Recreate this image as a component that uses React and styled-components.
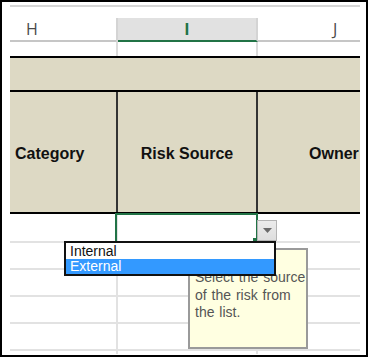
import React from 'react';
import styled, { createGlobalStyle } from 'styled-components';

const GlobalStyle = createGlobalStyle`
  html, body {
    margin: 0;
    padding: 0;
    background: #fff;
  }
  * {
    box-sizing: border-box;
  }
`;

const COLS = '108px 140px 102px';
const TAN = '#ddd9c4';
const GRID = '#e2e2e2';
const EXCEL_GREEN = '#217346';

const Frame = styled.div`
  position: relative;
  width: 368px;
  height: 357px;
  border: 2px solid #000;
  background: #fff;
  padding: 3px 0 0 8px;
  overflow: hidden;
`;

const Sheet = styled.div`
  width: 350px;
  height: 349px;
  overflow: hidden;
  display: flex;
  flex-direction: column;
  font-family: 'Liberation Sans', Arial, sans-serif;
`;

const TopRule = styled.div`
  flex: none;
  height: 2px;
  background: #d6d6d6;
`;

const ColHeadRow = styled.div`
  flex: none;
  display: grid;
  grid-template-columns: ${COLS};
  align-items: end;
  height: 35px;
`;

const ColHead = styled.div`
  height: 24px;
  display: flex;
  align-items: center;
  justify-content: ${p => (p.$active ? 'center' : 'flex-start')};
  padding-left: ${p => p.$pad || 0}px;
  padding-bottom: 1px;
  font-family: 'Open Sans', 'Noto Sans', sans-serif;
  font-size: 16px;
  font-weight: ${p => (p.$active ? 700 : 400)};
  color: ${p => (p.$active ? EXCEL_GREEN : '#4a4a4a')};
  background: ${p => (p.$active ? '#e1e1e1' : 'transparent')};
  border-bottom: 2px solid ${p => (p.$active ? EXCEL_GREEN : '#c6c6c6')};
  border-right: ${p => (p.$active ? '2px solid #d4d4d4' : 'none')};
  box-shadow: ${p => (p.$active ? '-2px 0 0 #d4d4d4' : 'none')};
`;

const GapRow = styled.div`
  flex: none;
  display: grid;
  grid-template-columns: ${COLS};
  height: 14px;
`;

const GapCell = styled.div`
  border-right: ${p => (p.$active ? '2px solid #dcdcdc' : 'none')};
  box-shadow: ${p => (p.$active ? '-2px 0 0 #dcdcdc' : 'none')};
`;

const BlackRule = styled.div`
  flex: none;
  height: 2px;
  background: #000;
`;

const TanBand = styled.div`
  flex: none;
  height: 32px;
  background: ${TAN};
`;

const TitleRow = styled.div`
  flex: none;
  display: grid;
  grid-template-columns: ${COLS};
  height: 120px;
  background: ${TAN};
`;

const TitleCell = styled.div`
  display: flex;
  align-items: center;
  justify-content: ${p => p.$justify || 'center'};
  padding-left: ${p => p.$pad || 0}px;
  padding-top: 3px;
  border-right: ${p => (p.$divider ? '2px solid #333' : 'none')};
  font-size: 16px;
  font-weight: 700;
  color: #111;
  white-space: nowrap;
  overflow: hidden;
`;

const DataRow = styled.div`
  flex: none;
  display: grid;
  grid-template-columns: ${COLS};
  height: ${p => p.$h}px;
`;

const DataCell = styled.div`
  position: relative;
  border-bottom: 2px solid ${GRID};
  border-right: ${p => (p.$last ? 'none' : `2px solid ${GRID}`)};

  ${p =>
    p.$selected &&
    `
    &::after {
      content: '';
      position: absolute;
      left: -3px;
      right: -2px;
      top: -1px;
      bottom: -2px;
      border: 2px solid ${EXCEL_GREEN};
    }
    &::before {
      content: '';
      position: absolute;
      right: -1px;
      bottom: -1px;
      width: 4px;
      height: 4px;
      background: ${EXCEL_GREEN};
      z-index: 1;
    }
  `}
`;

const DropButton = styled.div`
  position: absolute;
  left: 255px;
  top: 218px;
  width: 20px;
  height: 21px;
  display: flex;
  align-items: center;
  justify-content: center;
  background: linear-gradient(#ececec, #dedede);
  border: 1px solid #b4b4b4;
`;

const ListBox = styled.div`
  position: absolute;
  left: 62px;
  top: 239px;
  width: 212px;
  height: 35px;
  border: 2px solid #111;
  background: #fff;
  font-family: 'Liberation Sans', Arial, sans-serif;
  font-size: 14px;
  z-index: 3;
`;

const ListItem = styled.div`
  height: ${p => p.$h}px;
  line-height: ${p => p.$h}px;
  padding-left: 4px;
  color: ${p => (p.$selected ? '#fff' : '#111')};
  background: ${p => (p.$selected ? '#3399ff' : 'transparent')};
`;

const Tooltip = styled.div`
  position: absolute;
  left: 186px;
  top: 246px;
  width: 120px;
  height: 101px;
  padding: 19px 0 0 5px;
  background: #ffffe1;
  border: 2px solid #9a9a9a;
  font-family: 'Liberation Sans', Arial, sans-serif;
  font-size: 14px;
  word-spacing: 1px;
  line-height: 17.5px;
  color: #555;
  white-space: nowrap;
  z-index: 2;
`;

const dataRows = [29, 27, 27, 27, 27, 27];

export default function App() {
  return (
    <>
      <GlobalStyle />
      <Frame>
        <Sheet>
          <TopRule />
          <ColHeadRow>
            <ColHead $pad={16}>H</ColHead>
            <ColHead $active>I</ColHead>
            <ColHead $pad={75}>J</ColHead>
          </ColHeadRow>
          <GapRow>
            <GapCell />
            <GapCell $active />
            <GapCell />
          </GapRow>
          <BlackRule />
          <TanBand />
          <BlackRule />
          <TitleRow>
            <TitleCell $divider $justify="flex-start" $pad={5}>Category</TitleCell>
            <TitleCell $divider>Risk Source</TitleCell>
            <TitleCell $justify="flex-start" $pad={51}>Owner</TitleCell>
          </TitleRow>
          <BlackRule />
          {dataRows.map((h, i) => (
            <DataRow key={i} $h={h}>
              <DataCell />
              <DataCell $selected={i === 0} />
              <DataCell $last />
            </DataRow>
          ))}
        </Sheet>

        <DropButton>
          <svg width="9" height="5" viewBox="0 0 9 5">
            <path d="M0 0 H9 L4.5 5 Z" fill="#6a6a6a" />
          </svg>
        </DropButton>

        <Tooltip>
          Select the source
          <br />
          of the risk from
          <br />
          the list.
        </Tooltip>

        <ListBox>
          <ListItem $h={16}>Internal</ListItem>
          <ListItem $h={15} $selected>External</ListItem>
        </ListBox>
      </Frame>
    </>
  );
}
